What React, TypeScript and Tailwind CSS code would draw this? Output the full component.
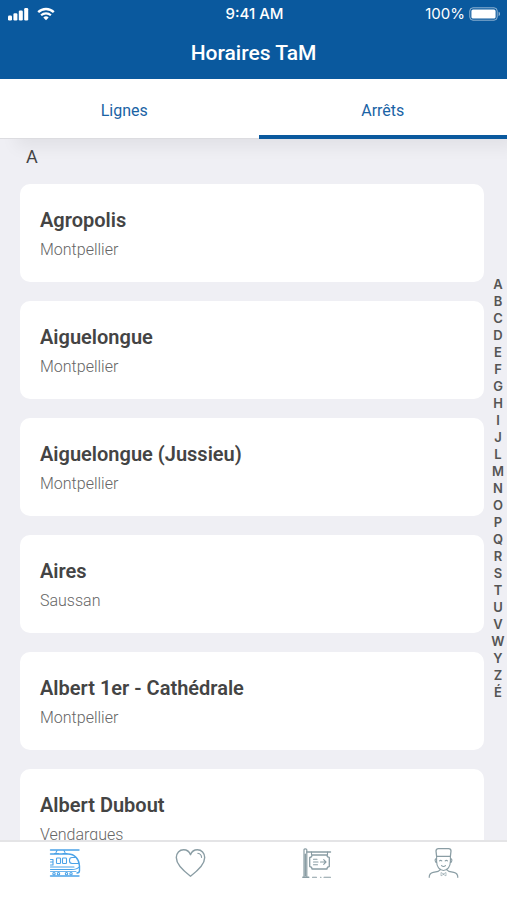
import type { ReactNode } from "react";

type Stop = { name: string; city: string };

const stops: Stop[] = [
  { name: "Agropolis", city: "Montpellier" },
  { name: "Aiguelongue", city: "Montpellier" },
  { name: "Aiguelongue (Jussieu)", city: "Montpellier" },
  { name: "Aires", city: "Saussan" },
  { name: "Albert 1er - Cathédrale", city: "Montpellier" },
  { name: "Albert Dubout", city: "Vendargues" },
];

const letters = [..."ABCDEFGHIJLMNOPQRSTUVWYZÉ"];

function SignalIcon() {
  return (
    <svg className="h-[14px] w-[21px]" viewBox="0 0 21 14" fill="currentColor" aria-hidden="true">
      <rect x="0" y="8.5" width="4" height="5" rx="1.2" />
      <rect x="5.4" y="6.2" width="4" height="7.3" rx="1.2" />
      <rect x="10.8" y="3.6" width="4" height="9.9" rx="1.2" />
      <rect x="16.2" y="1" width="4" height="12.5" rx="1.2" />
    </svg>
  );
}

function WifiIcon() {
  return (
    <svg className="h-[14px] w-[18px]" viewBox="0 0 18 14" fill="none" stroke="currentColor" aria-hidden="true">
      <path d="M1.2 5.2a11.2 11.2 0 0 1 15.6 0" strokeWidth="2.4" />
      <path d="M4.1 8.2a7.2 7.2 0 0 1 9.8 0" strokeWidth="2.2" />
      <path d="M9 13.2 6.3 10.4a4 4 0 0 1 5.4 0z" fill="currentColor" stroke="none" />
    </svg>
  );
}

function BatteryIcon() {
  return (
    <svg className="h-[14px] w-[32px]" viewBox="0 0 32 14" fill="none" aria-hidden="true">
      <rect x="0.8" y="0.8" width="27.4" height="12.4" rx="3.2" stroke="currentColor" strokeOpacity="0.55" />
      <rect x="2.4" y="2.4" width="24.2" height="9.2" rx="1.6" fill="currentColor" />
      <path d="M29.6 4.8c1.8.6 1.8 3.8 0 4.4z" fill="currentColor" fillOpacity="0.6" />
    </svg>
  );
}

function IconFrame({ children }: { children: ReactNode }) {
  return (
    <svg
      className="size-8"
      viewBox="0 0 32 32"
      fill="none"
      stroke="currentColor"
      strokeWidth="1.1"
      strokeLinecap="round"
      strokeLinejoin="round"
      aria-hidden="true"
    >
      {children}
    </svg>
  );
}

function TrainIcon() {
  return (
    <IconFrame>
      <path d="M1.5 3h28.5M1.500 29h28.500" strokeWidth="1.4" />
      <path d="M5.500 6.500h4M7 5.500l1-2M14 6.500h4M16 5.500l-1-2" />
      <path d="M1.500 7H19c6.500 0 11 4.500 11.500 12v4.500c0 1.500-.8 2.500-2.500 2.500" strokeWidth="1.400" />
      <path d="M26.500 10.500H23c-1.500 0-2.500 1.200-2.500 2.700v.6c0 1.500 1 2.700 2.500 2.700h6.500" />
      <rect x="7.500" y="11" width="4" height="5.500" rx=".8" />
      <rect x="13.500" y="11" width="4" height="5.500" rx=".8" />
      <path d="M1.500 12.500h2.500V18H1.500M1.500 15h2.500M1.500 20H25M1.500 22.500h21c3 0 6-.5 7.500-2.500" />
      <path d="M1.500 24.500H27" strokeWidth="0.800" />
      <circle cx="5" cy="26.700" r="1.200" />
      <circle cx="9.500" cy="26.700" r="1.200" />
      <circle cx="17.500" cy="26.700" r="1.200" />
      <circle cx="22" cy="26.700" r="1.200" />
    </IconFrame>
  );
}

function HeartIcon() {
  return (
    <IconFrame>
      <path
        d="M15.500 29.200C10.500 25.500 1.300 18.600 1.300 10.600c0-4.600 3.200-7.900 7.300-7.900 3.200 0 5.700 1.800 6.900 5 1.200-3.200 3.700-5 6.900-5 4.100 0 7.300 3.300 7.300 7.900 0 8-9.200 14.900-14.200 18.600z"
        strokeWidth="1.400"
      />
      <path d="M22.800 6.300c2.200.3 3.600 1.900 3.800 4.100" />
    </IconFrame>
  );
}

function StopSignIcon() {
  return (
    <IconFrame>
      <path d="M2 29.500V2.800c0-1.200 2.800-1.200 2.800 0v26.700M3.400 7v22" strokeWidth="1.200" />
      <path d="M.8 30.200h6M4.800 5h23.700" strokeWidth="1.400" />
      <path d="M9.500 5v3M25.500 5v3" />
      <path
        d="M10 8h15c0 1.500.8 2.400 2.300 2.400v9.200c-1.500 0-2.300.9-2.300 2.400H10c0-1.500-.8-2.400-2.300-2.400v-9.200C9.200 10.400 10 9.500 10 8z"
        strokeWidth="1.300"
      />
      <path d="M11.500 12.200h3.500M11.500 15h4.500M11.500 17.800h4M18.500 15h5.500M21.700 12.700 24 15l-2.300 2.300" />
      <path d="M10.500 30.200h4M18.500 30.200h.5M22 30.200h6.500" />
    </IconFrame>
  );
}

function DriverIcon() {
  return (
    <IconFrame>
      <path d="M8.600 9.300 8 4c0-1.500 1-2.400 2.400-2.400h10.200C22 1.600 23 2.500 23 4l-.6 5.300z" strokeWidth="1.300" />
      <path d="M8.600 9.300v4.900c0 5.300 2.900 9.300 6.900 9.300s6.900-4 6.900-9.300V9.300M8.600 11.500c-2 0-2 4 .3 4.200M22.400 11.500c2 0 2 4-.3 4.200" />
      <path d="M11.500 13.800c.7-.6 1.600-.6 2.300 0M17.200 13.800c.7-.6 1.600-.6 2.300 0M13.500 18.700c1.300 1.100 2.700 1.100 4 0" />
      <path
        d="M1.200 30.300c0-3 1.500-4.400 4-4.900l5-1 2.300-1.900M29.800 30.300c0-3-1.500-4.400-4-4.900l-5-1-2.300-1.900"
        strokeWidth="1.200"
      />
      <path d="M15.500 27l-2.500-1.500v3zM15.500 27l2.500-1.500v3z" strokeWidth="0.600" />
    </IconFrame>
  );
}

const navItems = [
  { label: "Horaires", icon: <TrainIcon />, active: true },
  { label: "Favoris", icon: <HeartIcon />, active: false },
  { label: "Stations", icon: <StopSignIcon />, active: false },
  { label: "Profil", icon: <DriverIcon />, active: false },
];

function StopCard({ stop }: { stop: Stop }) {
  return (
    <li>
      <a href="#" className="block rounded-[10px] bg-white px-5 pt-[22px] pb-5">
        <h3 className="text-[20px] leading-7 font-semibold text-[#444444]">{stop.name}</h3>
        <p className="mt-1 text-[16px] leading-6 font-light text-[#666666]">{stop.city}</p>
      </a>
    </li>
  );
}

export default function App() {
  return (
    <div className="flex h-screen flex-col overflow-hidden bg-[#efeff4] font-['Roboto',sans-serif]">
      <header className="bg-[#0a599e] text-white">
        <div className="grid grid-cols-3 items-center pt-1 pr-[6px] pl-2 font-['Inter',sans-serif] text-[15px] leading-5">
          <div className="flex items-center gap-2">
            <SignalIcon />
            <WifiIcon />
          </div>
          <span className="text-center font-medium">9:41 AM</span>
          <div className="flex items-center justify-end gap-1">
            <span>100%</span>
            <BatteryIcon />
          </div>
        </div>
        <h1 className="pt-[15px] pb-3 text-center text-[21px] leading-7 font-medium">Horaires TaM</h1>
      </header>

      <div
        role="tablist"
        className="relative grid grid-cols-2 gap-[10px] border-b border-[#dcdce0] bg-white text-[16px] leading-6 text-[#1a63a5] shadow-[12px_12px_16px_-4px_rgba(0,0,0,0.06)]"
      >
        <button type="button" role="tab" aria-selected={false} className="pt-5 pb-[15px]">
          Lignes
        </button>
        <button
          type="button"
          role="tab"
          aria-selected={true}
          className="-mb-px border-b-4 border-[#0a599e] pt-5 pb-3"
        >
          Arrêts
        </button>
      </div>

      <main className="flex min-h-0 flex-1 overflow-hidden">
        <section className="min-w-0 flex-1 pl-5">
          <h2 className="relative px-[6px] pt-[6px] pb-[15px] text-[18px] leading-6 text-[#444444]">A</h2>
          <ul className="flex flex-col gap-[19px]">
            {stops.map((stop) => (
              <StopCard key={stop.name} stop={stop} />
            ))}
          </ul>
        </section>
        <nav
          aria-label="Index"
          className="flex w-[23px] flex-col items-center justify-center pb-[2px] pl-[5px] font-['Inter',sans-serif] text-[13px] leading-[17px] font-semibold text-[#555555]"
        >
          {letters.map((letter) => (
            <a key={letter} href="#">
              {letter}
            </a>
          ))}
        </nav>
      </main>

      <nav className="relative grid grid-cols-4 border-t-2 border-[#e4e4e6] bg-white pt-[5px] pb-[21px] pl-[2px]">
        {navItems.map((item) => (
          <a
            key={item.label}
            href="#"
            aria-label={item.label}
            className={item.active ? "flex justify-center text-[#4ba3e8]" : "flex justify-center text-[#8a9da4]"}
          >
            {item.icon}
          </a>
        ))}
      </nav>
    </div>
  );
}
